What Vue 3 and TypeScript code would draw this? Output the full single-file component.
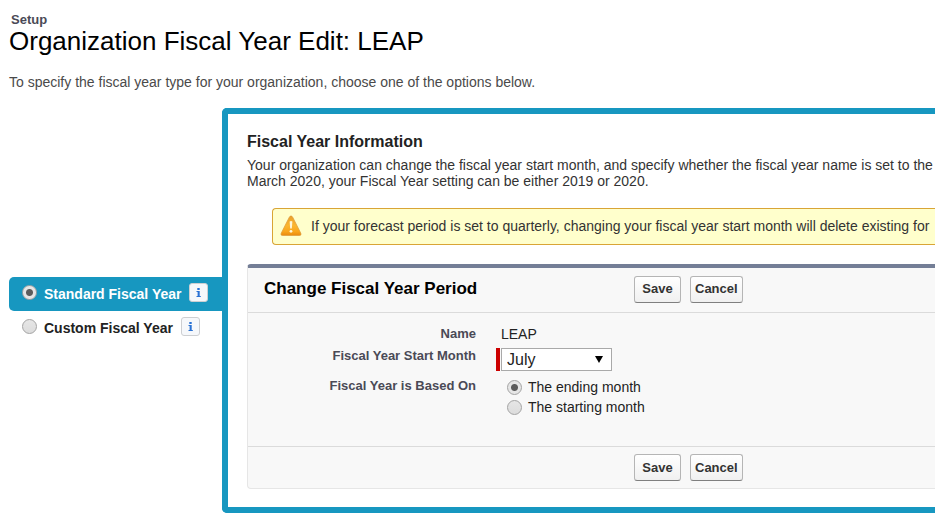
<script setup lang="ts">
import { ref } from 'vue'

type YearType = 'standard' | 'custom'
type Basis = 'ending' | 'starting'

const yearTypes: { id: YearType; label: string }[] = [
  { id: 'standard', label: 'Standard Fiscal Year' },
  { id: 'custom', label: 'Custom Fiscal Year' },
]
const bases: { id: Basis; label: string }[] = [
  { id: 'ending', label: 'The ending month' },
  { id: 'starting', label: 'The starting month' },
]
const months: string[] = [
  'January', 'February', 'March', 'April', 'May', 'June',
  'July', 'August', 'September', 'October', 'November', 'December',
]

const yearType = ref<YearType>('standard')
const basis = ref<Basis>('ending')
const startMonth = ref('July')
</script>

<template>
  <div class="page">
    <header class="heading">
      <div class="section">Setup</div>
      <h1>Organization Fiscal Year Edit: LEAP</h1>
      <p>To specify the fiscal year type for your organization, choose one of the options below.</p>
    </header>

    <main class="layout">
      <nav class="tabs">
        <div v-for="t in yearTypes" :key="t.id" class="tab" :class="{ active: yearType === t.id }">
          <input :id="t.id" v-model="yearType" type="radio" name="yearType" :value="t.id" />
          <label :for="t.id">{{ t.label }}</label>
          <button type="button" class="info" :aria-label="'About ' + t.label">
            <svg viewBox="0 0 19 19" width="19" height="19" aria-hidden="true">
              <path d="M8.300 5h2.400v2H8.300zM7.500 8h3.200v5h1.100v1H7.500v-1h1.100V9H7.500z" fill="#2a72d4" />
            </svg>
          </button>
        </div>
      </nav>

      <section class="panel">
        <h2>Fiscal Year Information</h2>
        <p class="intro">
          Your organization can change the fiscal year start month, and specify whether the fiscal year name is set to the<br />
          March 2020, your Fiscal Year setting can be either 2019 or 2020.
        </p>

        <div class="warning" role="alert">
          <svg viewBox="0 0 22 22" width="22" height="22" aria-hidden="true">
            <defs>
              <linearGradient id="amber" x1="0" y1="0" x2="0" y2="1">
                <stop offset="0" stop-color="#e9a02c" />
                <stop offset="0.5" stop-color="#fbb630" />
                <stop offset="0.8" stop-color="#f9a51b" />
                <stop offset="1" stop-color="#e8890f" />
              </linearGradient>
            </defs>
            <path d="M11 1c.8 0 1.300.5 1.700 1.200l8 15.800c.7 1.500.3 2.500-1.200 2.500H2.500c-1.500 0-1.900-1-1.200-2.500l8-15.800c.4-.7.900-1.200 1.700-1.200z" fill="url(#amber)" stroke="#dd9a3a" stroke-width="0.7" />
            <path d="M9.600 6.500q1.400-.8 2.800 0l-.6 7h-1.600z" fill="#fff6d8" />
            <circle cx="11" cy="16.300" r="1.400" fill="#fff6d8" />
          </svg>
          <span>If your forecast period is set to quarterly, changing your fiscal year start month will delete existing for</span>
        </div>

        <form class="block" @submit.prevent>
          <div class="bar top">
            <h3>Change Fiscal Year Period</h3>
            <div class="actions">
              <button type="submit" class="btn">Save</button>
              <button type="button" class="btn">Cancel</button>
            </div>
          </div>

          <div class="fields">
            <div class="name">Name</div>
            <div class="value">LEAP</div>

            <label class="name" for="month">Fiscal Year Start Month</label>
            <div class="month">
              <select id="month" v-model="startMonth" required>
                <option v-for="m in months" :key="m">{{ m }}</option>
              </select>
              <svg class="arrow" viewBox="0 0 8 7" width="8" height="7" aria-hidden="true">
                <path d="M0 0h8L4 7z" fill="#000" />
              </svg>
            </div>

            <div id="basis" class="name based">Fiscal Year is Based On</div>
            <div class="options" role="radiogroup" aria-labelledby="basis">
              <label v-for="b in bases" :key="b.id">
                <input v-model="basis" type="radio" name="basis" :value="b.id" />
                <span>{{ b.label }}</span>
              </label>
            </div>
          </div>

          <div class="bar bottom">
            <div class="actions">
              <button type="submit" class="btn">Save</button>
              <button type="button" class="btn">Cancel</button>
            </div>
          </div>
        </form>
      </section>
    </main>
  </div>
</template>

<style>
body {
  background: #fff;
}
</style>

<style scoped>
.page {
  padding: 12px 0 16px 9px;
  overflow: hidden;
  font: 14px/16px "Liberation Sans", Arial, sans-serif;
  color: #333;
}
.page * {
  box-sizing: border-box;
}
h1,
h2,
h3,
p {
  margin: 0;
}
.section {
  padding-left: 2px;
  font-size: 13px;
  font-weight: bold;
  color: #4a4a56;
}
h1 {
  font-size: 26px;
  font-weight: normal;
  line-height: 26px;
  color: #000;
}
.heading p {
  margin: 20px 0 18px;
  color: #4a4a4a;
}
.layout {
  display: flex;
  align-items: center;
}
.tabs {
  flex: 0 0 213px;
}
.tab {
  display: flex;
  align-items: center;
  height: 34px;
  padding: 0 0 2px 13px;
  border-radius: 5px 0 0 5px;
  color: #222;
  font-weight: bold;
}
.tab.active {
  background: #1797c0;
  color: #fff;
}
.tab label {
  margin: 2px 8px 0 7px;
  white-space: nowrap;
}
input[type="radio"] {
  appearance: none;
  flex: none;
  width: 15px;
  height: 15px;
  margin: 0;
  border: 1px solid #a3a3a3;
  border-radius: 50%;
  background: linear-gradient(#e6e6e6, #dcdcdc);
}
input[type="radio"]:checked {
  background: radial-gradient(circle, #5c5c5c 3px, #e6e6e6 4px);
}
.info {
  display: flex;
  flex: none;
  width: 19px;
  height: 19px;
  padding: 0;
  border: 1px solid #cdcfd2;
  border-radius: 3px;
  background: #f6f8fb;
  align-items: center;
  justify-content: center;
}
.info svg {
  flex: none;
}
.panel {
  flex: 1;
  min-width: 0;
  padding: 19px 0 18px 19px;
  border: 6px solid #1797c0;
  border-right: 0;
  border-radius: 5px 0 0 5px;
}
h2 {
  font-size: 16px;
  line-height: 18px;
  color: #222;
}
.intro {
  margin: 6px 0 19px;
  white-space: nowrap;
}
.warning {
  display: flex;
  align-items: center;
  gap: 9px;
  height: 37px;
  margin: 0 0 19px 25px;
  padding: 0 0 2px 7px;
  border: 1px solid #d9a536;
  border-right: 0;
  border-radius: 4px 0 0 4px;
  background: #ffffcc;
  white-space: nowrap;
}
.warning svg {
  flex: none;
}
.block {
  border: 1px solid #e6e6e6;
  border-top: 4px solid #747e96;
  border-right: 0;
  border-radius: 4px 0 0 4px;
  background: #f8f8f8;
}
.bar {
  display: grid;
  grid-template-columns: 370px 1fr;
  align-items: center;
  padding-left: 16px;
}
.bar.top {
  height: 45px;
  padding-bottom: 2px;
  border-bottom: 1px solid #dbdbdb;
}
.bar.bottom {
  height: 42px;
  border-top: 1px solid #dbdbdb;
}
.bar.bottom .actions {
  grid-column: 2;
}
h3 {
  font-size: 17px;
  line-height: 20px;
  color: #000;
}
.actions {
  display: flex;
  gap: 9px;
}
.btn {
  min-width: 47px;
  height: 27px;
  padding: 0 4px;
  border: 1px solid #b5b5b5;
  border-bottom-color: #7f7f7f;
  border-radius: 3px;
  background: linear-gradient(#fff, #f0f0f0);
  font: bold 13px/16px "Liberation Sans", Arial, sans-serif;
  color: #333;
}
.fields {
  display: grid;
  grid-template-columns: 228px 1fr;
  column-gap: 25px;
  padding: 13px 0 30px;
}
.name {
  font-size: 13px;
  font-weight: bold;
  text-align: right;
  color: #4a4a56;
}
.value {
  color: #222;
  height: 22px;
}
.month {
  position: relative;
  display: flex;
  width: 116px;
  height: 23px;
  margin-left: -5px;
  border-left: 4px solid #c00;
}
select {
  appearance: none;
  width: 111px;
  height: 23px;
  margin-left: 1px;
  padding: 0 5px;
  border: 1px solid #a9a9a9;
  border-radius: 0;
  background: #fff;
  font: 16px/20px "Liberation Sans", Arial, sans-serif;
  color: #222;
}
.arrow {
  position: absolute;
  right: 9px;
  top: 8px;
  pointer-events: none;
}
.based {
  margin-top: 7px;
}
.options {
  display: flex;
  flex-direction: column;
  gap: 3px;
  margin: 8px 0 0 6px;
  color: #222;
}
.options label {
  display: flex;
  align-items: center;
  gap: 6px;
  height: 17px;
}
.options span {
  padding-bottom: 2px;
}
</style>
